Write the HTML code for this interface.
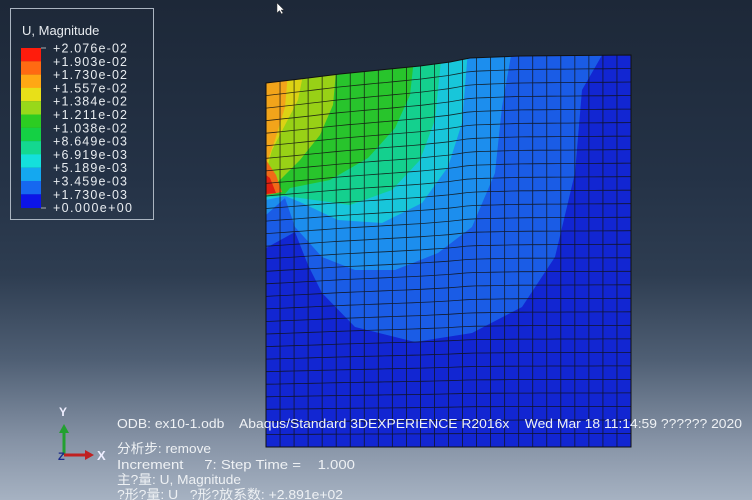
<!DOCTYPE html>
<html><head><meta charset="utf-8"><style>
html,body{margin:0;padding:0}
body{width:752px;height:500px;overflow:hidden;background:linear-gradient(#1d2838 0%,#243246 35%,#2e3d51 55%,#4f5f74 72%,#8592a5 88%,#a6b2c2 100%)}
svg{position:absolute;left:0;top:0}
text{font-family:"Liberation Sans","Noto Sans CJK SC",sans-serif}
</style></head><body>
<svg width="752" height="500" viewBox="0 0 752 500" xmlns="http://www.w3.org/2000/svg">
<defs><clipPath id="m"><path d="M266,83 L300,79 L340,74 L380,70 L420,66 L450,62 L470,58 L520,56 L631,55 L631,447 L266,447 Z"/></clipPath></defs>
<g clip-path="url(#m)">
<rect x="260" y="50" width="380" height="400" fill="#1226d2"/>
<path d="M266,248 L295,232 L308,265 L322,293 L355,327 L415,342 L472,333 L522,307 L555,257 L575,173 L582,90 L605,50 L260,50 Z" fill="#1a5ce6"/>
<path d="M266,215 L285,198 L295,227 L322,257 L355,270 L395,270 L438,253 L472,227 L495,173 L502,107 L512,50 L260,50 Z" fill="#1c8eee"/>
<path d="M266,200 L285,196 L300,202 L338,220 L382,223 L422,203 L448,167 L462,123 L468,50 L260,50 Z" fill="#18c6da"/>
<path d="M266,197 L285,196 L300,198 L350,205 L392,190 L420,160 L435,120 L442,50 L260,50 Z" fill="#14d08e"/>
<path d="M266,195 L285,194 L290,188 L330,180 L368,158 L395,128 L410,95 L415,50 L260,50 Z" fill="#28c42c"/>
<path d="M266,192 L280,180 L300,160 L320,135 L333,105 L338,50 L260,50 Z" fill="#98d116"/>
<path d="M266,172 L272,150 L284,127 L298,100 L308,50 L260,50 Z" fill="#dcd214"/>
<path d="M266,165 L275,140 L285,107 L290,50 L260,50 Z" fill="#f2a41a"/>
<path d="M266,195 L282,192 L276,175 L266,160 Z" fill="#f06a18"/>
<path d="M266,194 L276,193 L270,178 L266,175 Z" fill="#e02010"/>
<g id="grid" stroke="#111" stroke-width="0.8" fill="none" opacity="0.85"></g>
</g>
<path d="M266,83 L300,79 L340,74 L380,70 L420,66 L450,62 L470,58 L520,56 L631,55 L631,447 L266,447 Z" fill="none" stroke="#111" stroke-width="1"/>
<rect x="10.5" y="8.5" width="143" height="211" fill="none" stroke="#aab4c0" stroke-width="1"/>
<text x="22" y="35" font-size="13" fill="#e8ecf0" font-family="DejaVu Sans,sans-serif">U, Magnitude</text>
<g>
<rect x="21" y="48" width="20" height="13.4" fill="#ff1c0c"/>
<rect x="21" y="61.3" width="20" height="13.4" fill="#ff6a12"/>
<rect x="21" y="74.6" width="20" height="13.4" fill="#ffa814"/>
<rect x="21" y="87.9" width="20" height="13.4" fill="#e8e018"/>
<rect x="21" y="101.2" width="20" height="13.4" fill="#98d81a"/>
<rect x="21" y="114.5" width="20" height="13.4" fill="#2ccc22"/>
<rect x="21" y="127.8" width="20" height="13.4" fill="#14d044"/>
<rect x="21" y="141.1" width="20" height="13.4" fill="#14d890"/>
<rect x="21" y="154.4" width="20" height="13.4" fill="#14e0dc"/>
<rect x="21" y="167.7" width="20" height="13.4" fill="#14a8f0"/>
<rect x="21" y="181" width="20" height="13.4" fill="#1668f0"/>
<rect x="21" y="194.3" width="20" height="13.7" fill="#0c14e8"/>
</g>
<g font-size="12.5" fill="#e8ecf0" font-family="DejaVu Sans,sans-serif">
<text x="53" y="52.5" textLength="74">+2.076e-02</text>
<text x="53" y="65.8" textLength="74">+1.903e-02</text>
<text x="53" y="79.1" textLength="74">+1.730e-02</text>
<text x="53" y="92.4" textLength="74">+1.557e-02</text>
<text x="53" y="105.7" textLength="74">+1.384e-02</text>
<text x="53" y="119" textLength="74">+1.211e-02</text>
<text x="53" y="132.3" textLength="74">+1.038e-02</text>
<text x="53" y="145.6" textLength="74">+8.649e-03</text>
<text x="53" y="158.9" textLength="74">+6.919e-03</text>
<text x="53" y="172.2" textLength="74">+5.189e-03</text>
<text x="53" y="185.5" textLength="74">+3.459e-03</text>
<text x="53" y="198.8" textLength="74">+1.730e-03</text>
<text x="53" y="212.1" textLength="79">+0.000e+00</text>
</g>
<g stroke="#ccc" stroke-width="0.8">
<line x1="41" y1="48" x2="46" y2="48"/><line x1="41" y1="208" x2="46" y2="208"/>
</g>
<line x1="64" y1="455" x2="64" y2="432" stroke="#22a030" stroke-width="3"/>
<polygon points="59,433 69,433 64,424" fill="#22a030"/>
<line x1="64" y1="455" x2="86" y2="455" stroke="#c02020" stroke-width="3"/>
<polygon points="85,450 85,460 94,455" fill="#c02020"/>
<text x="59" y="416" font-size="12" font-weight="bold" fill="#eef">Y</text>
<text x="97" y="460" font-size="13" font-weight="bold" fill="#eef">X</text>
<text x="58" y="460" font-size="11" font-weight="bold" fill="#1a2a8a">Z</text>
<g font-size="13" fill="#eef1f4">
<text x="117" y="428" xml:space="preserve" textLength="625" lengthAdjust="spacingAndGlyphs">ODB: ex10-1.odb    Abaqus/Standard 3DEXPERIENCE R2016x    Wed Mar 18 11:14:59 ?????? 2020</text>
<text x="117" y="453" textLength="94" lengthAdjust="spacingAndGlyphs">分析步: remove</text>
<text x="117" y="469" xml:space="preserve" textLength="238" lengthAdjust="spacingAndGlyphs">Increment     7: Step Time =    1.000</text>
<text x="117" y="484" textLength="124" lengthAdjust="spacingAndGlyphs">主?量: U, Magnitude</text>
<text x="117" y="499" xml:space="preserve" textLength="226" lengthAdjust="spacingAndGlyphs">?形?量: U   ?形?放系数: +2.891e+02</text>
</g>
<path d="M277,3 L277,13 L279.5,10.5 L281.5,14 L283,13 L281,10 L284,10 Z" fill="#fff" stroke="#333" stroke-width="0.5"/>
</svg>
<script>
(function(){
var pts=[[266,83],[300,79],[340,74],[380,70],[420,66],[450,62],[470,58],[520,56],[631,55]];
function top(x){for(var i=0;i<pts.length-1;i++){if(x<=pts[i+1][0]){var t=(x-pts[i][0])/(pts[i+1][0]-pts[i][0]);return pts[i][1]+t*(pts[i+1][1]-pts[i][1]);}}return 55;}
var g=document.getElementById('grid'),s='';
var NC=26,NR=29;
for(var i=1;i<NC;i++){var x=266+(631-266)*i/NC;s+='<line x1="'+x+'" y1="'+top(x)+'" x2="'+x+'" y2="447"/>';}
for(var j=1;j<NR;j++){var d='';for(var k=0;k<=40;k++){var x=266+(631-266)*k/40;var ty=top(x);var y=ty+(447-ty)*j/NR;d+=(k?'L':'M')+x.toFixed(1)+','+y.toFixed(1);}s+='<path d="'+d+'"/>';}
g.innerHTML=s;
})();
</script>
</body></html>
